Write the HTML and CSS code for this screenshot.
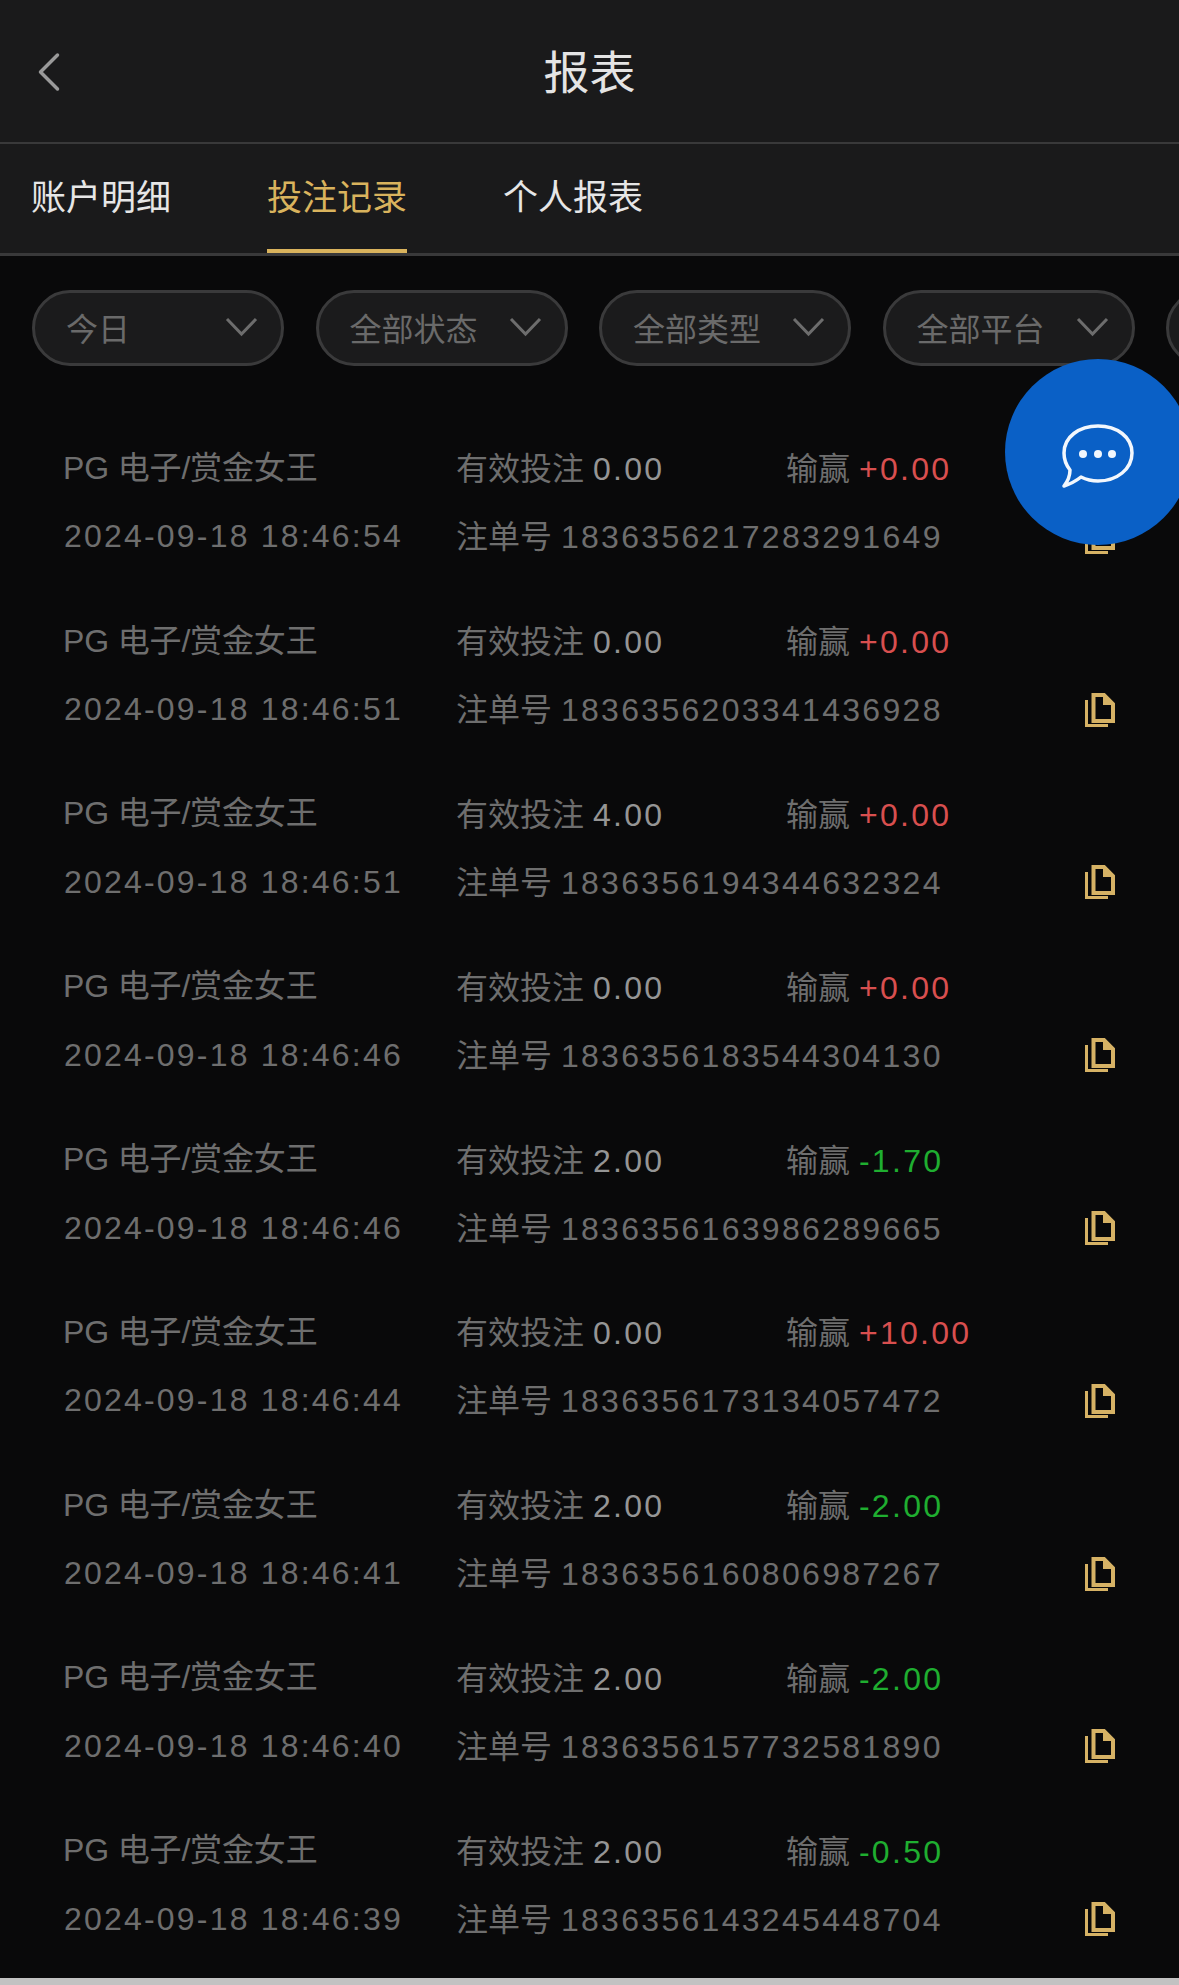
FILE: index.html
```html
<!DOCTYPE html>
<html lang="zh-CN">
<head>
<meta charset="utf-8">
<title>报表</title>
<link rel="stylesheet" href="styles.css">
</head>
<body>
<svg class="defs" width="0" height="0" aria-hidden="true">
  <symbol id="copy" viewBox="0 0 30 34">
    <path d="M1.5 7V32.5H23" fill="none" stroke="currentColor" stroke-width="3"/>
    <path d="M8.5 2H19L28 11V28H8.5Z" fill="none" stroke="currentColor" stroke-width="4"/>
    <path d="M18 1L29 12H18Z" fill="currentColor"/>
  </symbol>
  <symbol id="chev" viewBox="0 0 33 20">
    <path d="M2 2L16.5 17L31 2" fill="none" stroke="currentColor" stroke-width="3"/>
  </symbol>
</svg>
<div class="page">
  <header class="topbar">
    <svg class="back" viewBox="0 0 24 40" aria-hidden="true"><path d="M21 3L4 20L21 37" fill="none" stroke="currentColor" stroke-width="3.5" stroke-linecap="round" stroke-linejoin="round"/></svg>
    <h1 class="title">报表</h1>
  </header>
  <nav class="tabs">
    <span class="tab">账户明细</span>
    <span class="tab active">投注记录</span>
    <span class="tab">个人报表</span>
  </nav>
  <div class="filters">
    <div class="pill"><span>今日</span><svg class="chev"><use href="#chev"/></svg></div>
    <div class="pill"><span>全部状态</span><svg class="chev"><use href="#chev"/></svg></div>
    <div class="pill"><span>全部类型</span><svg class="chev"><use href="#chev"/></svg></div>
    <div class="pill"><span>全部平台</span><svg class="chev"><use href="#chev"/></svg></div>
    <div class="pill"></div>
  </div>
  <main class="list">
    <div class="row"><span class="game">PG 电子/赏金女王</span><span class="cell">有效投注 <b class="num val">0.00</b></span><span class="cell">输赢 <b class="num up">+0.00</b></span><span class="num time">2024-09-18 18:46:54</span><span class="cell order">注单号 <span class="num">1836356217283291649</span></span><svg class="copy"><use href="#copy"/></svg></div>
    <div class="row"><span class="game">PG 电子/赏金女王</span><span class="cell">有效投注 <b class="num val">0.00</b></span><span class="cell">输赢 <b class="num up">+0.00</b></span><span class="num time">2024-09-18 18:46:51</span><span class="cell order">注单号 <span class="num">1836356203341436928</span></span><svg class="copy"><use href="#copy"/></svg></div>
    <div class="row"><span class="game">PG 电子/赏金女王</span><span class="cell">有效投注 <b class="num val">4.00</b></span><span class="cell">输赢 <b class="num up">+0.00</b></span><span class="num time">2024-09-18 18:46:51</span><span class="cell order">注单号 <span class="num">1836356194344632324</span></span><svg class="copy"><use href="#copy"/></svg></div>
    <div class="row"><span class="game">PG 电子/赏金女王</span><span class="cell">有效投注 <b class="num val">0.00</b></span><span class="cell">输赢 <b class="num up">+0.00</b></span><span class="num time">2024-09-18 18:46:46</span><span class="cell order">注单号 <span class="num">1836356183544304130</span></span><svg class="copy"><use href="#copy"/></svg></div>
    <div class="row"><span class="game">PG 电子/赏金女王</span><span class="cell">有效投注 <b class="num val">2.00</b></span><span class="cell">输赢 <b class="num down">-1.70</b></span><span class="num time">2024-09-18 18:46:46</span><span class="cell order">注单号 <span class="num">1836356163986289665</span></span><svg class="copy"><use href="#copy"/></svg></div>
    <div class="row"><span class="game">PG 电子/赏金女王</span><span class="cell">有效投注 <b class="num val">0.00</b></span><span class="cell">输赢 <b class="num up">+10.00</b></span><span class="num time">2024-09-18 18:46:44</span><span class="cell order">注单号 <span class="num">1836356173134057472</span></span><svg class="copy"><use href="#copy"/></svg></div>
    <div class="row"><span class="game">PG 电子/赏金女王</span><span class="cell">有效投注 <b class="num val">2.00</b></span><span class="cell">输赢 <b class="num down">-2.00</b></span><span class="num time">2024-09-18 18:46:41</span><span class="cell order">注单号 <span class="num">1836356160806987267</span></span><svg class="copy"><use href="#copy"/></svg></div>
    <div class="row"><span class="game">PG 电子/赏金女王</span><span class="cell">有效投注 <b class="num val">2.00</b></span><span class="cell">输赢 <b class="num down">-2.00</b></span><span class="num time">2024-09-18 18:46:40</span><span class="cell order">注单号 <span class="num">1836356157732581890</span></span><svg class="copy"><use href="#copy"/></svg></div>
    <div class="row"><span class="game">PG 电子/赏金女王</span><span class="cell">有效投注 <b class="num val">2.00</b></span><span class="cell">输赢 <b class="num down">-0.50</b></span><span class="num time">2024-09-18 18:46:39</span><span class="cell order">注单号 <span class="num">1836356143245448704</span></span><svg class="copy"><use href="#copy"/></svg></div>
  </main>
  <div class="homebar"></div>
  <button class="fab" aria-label="客服">
    <svg viewBox="0 0 72 64" class="bubble" aria-hidden="true">
      <path d="M36 2C55 2 70 13 70 29C70 45 55 57 36 57C29 57 23 55 19 53C14 57 8 60 2 62C6 57 8 50 8 46C4 41 2 35 2 29C2 13 17 2 36 2Z" fill="none" stroke="currentColor" stroke-width="3.5" stroke-linejoin="round"/>
      <circle cx="21" cy="30" r="4" fill="currentColor"/><circle cx="36" cy="30" r="4" fill="currentColor"/><circle cx="50" cy="30" r="4" fill="currentColor"/>
    </svg>
  </button>
</div>
</body>
</html>
```
FILE: styles.css
```css
* { box-sizing: border-box; }
html, body { margin: 0; padding: 0; background: #09090a; }
body { font-family: "Liberation Sans", "Noto Sans CJK SC", sans-serif; }
.defs { position: absolute; }
.page { position: relative; width: 1179px; height: 1985px; overflow: hidden; display: flex; flex-direction: column; }
.topbar { height: 144px; flex: none; background: #1a1a1b; border-bottom: 2px solid #39393a; display: flex; align-items: center; justify-content: center; position: relative; padding-top: 4px; }
.back { position: absolute; left: 36px; top: 52px; width: 25px; height: 40px; color: #9a9a9a; }
.title { margin: 0; font-size: 46px; font-weight: 400; color: #e4e4e4; line-height: 1; }
.tabs { height: 112px; flex: none; background: #1a1a1b; border-bottom: 3px solid #39393a; display: flex; gap: 96px; padding-left: 31px; }
.tab { font-size: 35px; color: #e6e6e6; line-height: 108px; height: 109px; white-space: nowrap; }
.tab.active { color: #d9b35d; border-bottom: 4px solid #d9b35d; width: 140px; }
.filters { flex: none; display: flex; gap: 31.5px; padding: 34px 0 0 32px; height: 110px; }
.pill { flex: none; width: 252px; height: 76px; border: 3px solid #3a3a3b; border-radius: 38px; background: #1b1b1c; display: flex; align-items: center; justify-content: space-between; padding: 0 23px 2px 31px; font-size: 32px; color: #6a6a6a; }
.chev { width: 33px; height: 20px; color: #6d6d6d; }
.list { flex: none; padding-top: 48px; }
.row { height: 172.8px; display: grid; grid-template-columns: 392px 330px 299px 30px; grid-template-rows: 68px 68px; align-content: center; align-items: center; padding-left: 64px; font-size: 32px; color: #6e6e6e; }
.game { margin: -3px 0 0 -1px; white-space: nowrap; letter-spacing: -0.15px; }
.cell { white-space: nowrap; }
.num { letter-spacing: 2.3px; font-weight: 400; }
.order { grid-column: span 2; }
.time { grid-column: 1; white-space: nowrap; margin-top: 5px; letter-spacing: 2.2px; }
.val { color: #959595; }
.up { color: #d84f4f; }
.down { color: #1fae30; }
.copy { width: 30px; height: 34px; color: #d6b265; grid-column: 4; margin-top: 5px; }
.homebar { flex: none; height: 7px; margin-top: 8.8px; background: #c2c2c2; }
.fab { position: absolute; left: 1005px; top: 359px; width: 186px; height: 186px; border: 0; border-radius: 50%; background: #0a60c6; color: #f2f7fd; padding: 0; display: flex; align-items: center; justify-content: center; }
.bubble { width: 72px; height: 64px; margin-top: 7px; }
```
